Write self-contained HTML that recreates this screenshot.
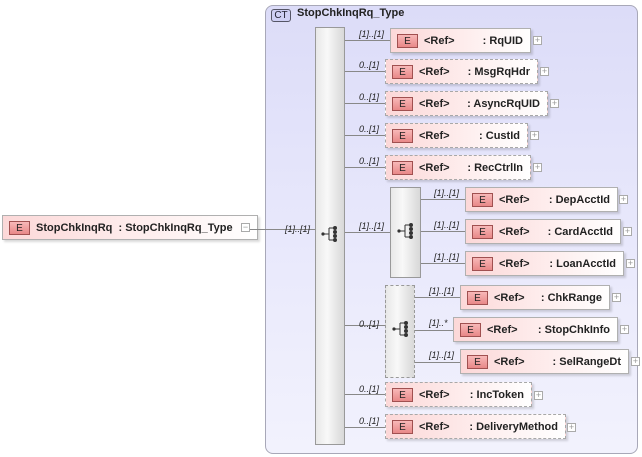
<html><head><style>
body{margin:0;width:642px;height:457px;background:#fff;position:relative;overflow:hidden;font-family:"Liberation Sans",sans-serif;}
.a{position:absolute;box-sizing:border-box}
.ct{left:265px;top:5px;width:373px;height:449px;border:1px solid #a8a8b8;border-radius:8px;background:linear-gradient(180deg,#dcdcf8,#eaeafc 60%,#f2f2fd)}
.el{height:25px;background:linear-gradient(90deg,#fcd8d8,#fff);border:1px solid #b0b0b0;display:flex;align-items:center;font-size:11px;font-weight:bold;color:#222;box-shadow:2px 2px 2px rgba(0,0,0,.15)}
.el.d{border:1px dashed #a8a8a8}
.e{width:21px;height:14px;border:1px solid #a05050;background:linear-gradient(#f8b8b8,#e88888);font-size:10px;font-weight:normal;text-align:center;line-height:14px;margin-left:6px;margin-right:6px;box-sizing:border-box;flex:none}
.el .n{margin-left:auto;padding-right:7px}
.p{width:9px;height:9px;border:1px solid #aaa;background:#fff;font-size:9px;line-height:7px;text-align:center;color:#999}
.h{height:1px;background:#888}
.v{width:1px;background:#888}
.lb{font-size:9px;font-style:italic;color:#222}
.sq{background:linear-gradient(90deg,#e8e8e8,#f8f8f8 40%,#d8d8d8);border:1px solid #999}
</style></head><body>
<div class="a ct"></div>
<div class="a" style="left:271px;top:9px;width:20px;height:13px;border:1px solid #556;border-radius:3px;background:#cfd0f4;font-size:10px;text-align:center;line-height:12px;color:#223">CT</div>
<div class="a" style="left:297px;top:7px;font-size:11px;font-weight:bold;color:#222">StopChkInqRq_Type</div>

<div class="a el" style="left:2px;top:215px;width:256px"><div class="e">E</div>StopChkInqRq&nbsp; : StopChkInqRq_Type</div>
<div class="a p" style="left:241px;top:223px">−</div>
<div class="a h" style="left:250px;top:229px;width:65px"></div>
<div class="a lb" style="left:285px;top:224px">[1]..[1]</div>

<div class="a sq" style="left:315px;top:27px;width:30px;height:418px"></div>
<svg class="a" style="left:321px;top:225px" width="20" height="20"><line x1="2" y1="9" x2="8" y2="9" stroke="#333"/><circle cx="2" cy="9" r="1.6" fill="#333"/><polyline points="8,3 8,15" stroke="#333" fill="none"/><line x1="8" y1="3" x2="13" y2="3" stroke="#333"/><line x1="8" y1="15" x2="13" y2="15" stroke="#333"/><circle cx="14" cy="3" r="2" fill="#333"/><circle cx="14" cy="7" r="2" fill="#333"/><circle cx="14" cy="11" r="2" fill="#333"/><circle cx="14" cy="15" r="2" fill="#333"/></svg>

<!-- lines from main seq -->
<div class="a h" style="left:345px;top:40px;width:45px"></div>
<div class="a h" style="left:345px;top:71px;width:40px"></div>
<div class="a h" style="left:345px;top:103px;width:40px"></div>
<div class="a h" style="left:345px;top:135px;width:40px"></div>
<div class="a h" style="left:345px;top:167px;width:40px"></div>
<div class="a h" style="left:345px;top:232px;width:45px"></div>
<div class="a h" style="left:345px;top:325px;width:40px"></div>
<div class="a h" style="left:345px;top:394px;width:40px"></div>
<div class="a h" style="left:345px;top:427px;width:40px"></div>

<div class="a lb" style="left:359px;top:29px">[1]..[1]</div>
<div class="a lb" style="left:359px;top:60px">0..[1]</div>
<div class="a lb" style="left:359px;top:92px">0..[1]</div>
<div class="a lb" style="left:359px;top:124px">0..[1]</div>
<div class="a lb" style="left:359px;top:156px">0..[1]</div>
<div class="a lb" style="left:359px;top:221px">[1]..[1]</div>
<div class="a lb" style="left:359px;top:319px">0..[1]</div>
<div class="a lb" style="left:359px;top:384px">0..[1]</div>
<div class="a lb" style="left:359px;top:416px">0..[1]</div>

<div class="a el" style="left:390px;top:28px;width:141px"><div class="e">E</div>&lt;Ref&gt;<span class="n">: RqUID</span></div><div class="a p" style="left:533px;top:36px">+</div>
<div class="a el d" style="left:385px;top:59px;width:153px"><div class="e">E</div>&lt;Ref&gt;<span class="n">: MsgRqHdr</span></div><div class="a p" style="left:540px;top:67px">+</div>
<div class="a el d" style="left:385px;top:91px;width:163px"><div class="e">E</div>&lt;Ref&gt;<span class="n">: AsyncRqUID</span></div><div class="a p" style="left:550px;top:99px">+</div>
<div class="a el d" style="left:385px;top:123px;width:143px"><div class="e">E</div>&lt;Ref&gt;<span class="n">: CustId</span></div><div class="a p" style="left:530px;top:131px">+</div>
<div class="a el d" style="left:385px;top:155px;width:146px"><div class="e">E</div>&lt;Ref&gt;<span class="n">: RecCtrlIn</span></div><div class="a p" style="left:533px;top:163px">+</div>

<!-- inner seq -->
<div class="a sq" style="left:390px;top:187px;width:31px;height:91px"></div>
<svg class="a" style="left:397px;top:222px" width="20" height="20"><line x1="2" y1="9" x2="8" y2="9" stroke="#333"/><circle cx="2" cy="9" r="1.6" fill="#333"/><polyline points="8,3 8,15" stroke="#333" fill="none"/><line x1="8" y1="3" x2="13" y2="3" stroke="#333"/><line x1="8" y1="15" x2="13" y2="15" stroke="#333"/><circle cx="14" cy="3" r="2" fill="#333"/><circle cx="14" cy="7" r="2" fill="#333"/><circle cx="14" cy="11" r="2" fill="#333"/><circle cx="14" cy="15" r="2" fill="#333"/></svg>
<div class="a h" style="left:421px;top:199px;width:44px"></div>
<div class="a h" style="left:421px;top:231px;width:44px"></div>
<div class="a h" style="left:421px;top:263px;width:44px"></div>
<div class="a lb" style="left:434px;top:188px">[1]..[1]</div>
<div class="a lb" style="left:434px;top:220px">[1]..[1]</div>
<div class="a lb" style="left:434px;top:252px">[1]..[1]</div>
<div class="a el" style="left:465px;top:187px;width:153px"><div class="e">E</div>&lt;Ref&gt;<span class="n">: DepAcctId</span></div><div class="a p" style="left:619px;top:195px">+</div>
<div class="a el" style="left:465px;top:219px;width:156px"><div class="e">E</div>&lt;Ref&gt;<span class="n">: CardAcctId</span></div><div class="a p" style="left:623px;top:227px">+</div>
<div class="a el" style="left:465px;top:251px;width:159px"><div class="e">E</div>&lt;Ref&gt;<span class="n">: LoanAcctId</span></div><div class="a p" style="left:626px;top:259px">+</div>

<!-- inner choice -->
<div class="a sq" style="left:385px;top:285px;width:30px;height:93px;border:1px dashed #999"></div>
<svg class="a" style="left:392px;top:320px" width="20" height="20"><line x1="2" y1="9" x2="8" y2="9" stroke="#333"/><circle cx="2" cy="9" r="1.6" fill="#333"/><polyline points="8,3 8,15" stroke="#333" fill="none"/><line x1="8" y1="3" x2="13" y2="3" stroke="#333"/><line x1="8" y1="15" x2="13" y2="15" stroke="#333"/><circle cx="14" cy="3" r="2" fill="#333"/><circle cx="14" cy="7" r="2" fill="#333"/><circle cx="14" cy="11" r="2" fill="#333"/><circle cx="14" cy="15" r="2" fill="#333"/></svg>
<div class="a h" style="left:415px;top:297px;width:45px"></div>
<div class="a h" style="left:415px;top:330px;width:38px"></div>
<div class="a h" style="left:415px;top:362px;width:45px"></div>
<div class="a lb" style="left:429px;top:286px">[1]..[1]</div>
<div class="a lb" style="left:429px;top:318px">[1]..*</div>
<div class="a lb" style="left:429px;top:350px">[1]..[1]</div>
<div class="a el" style="left:460px;top:285px;width:150px"><div class="e">E</div>&lt;Ref&gt;<span class="n">: ChkRange</span></div><div class="a p" style="left:612px;top:293px">+</div>
<div class="a el" style="left:453px;top:317px;width:165px"><div class="e">E</div>&lt;Ref&gt;<span class="n">: StopChkInfo</span></div><div class="a p" style="left:620px;top:325px">+</div>
<div class="a el" style="left:460px;top:349px;width:169px"><div class="e">E</div>&lt;Ref&gt;<span class="n">: SelRangeDt</span></div><div class="a p" style="left:631px;top:357px">+</div>

<div class="a el d" style="left:385px;top:382px;width:147px"><div class="e">E</div>&lt;Ref&gt;<span class="n">: IncToken</span></div><div class="a p" style="left:534px;top:391px">+</div>
<div class="a el d" style="left:385px;top:414px;width:181px"><div class="e">E</div>&lt;Ref&gt;<span class="n">: DeliveryMethod</span></div><div class="a p" style="left:567px;top:423px">+</div>
</body></html>
